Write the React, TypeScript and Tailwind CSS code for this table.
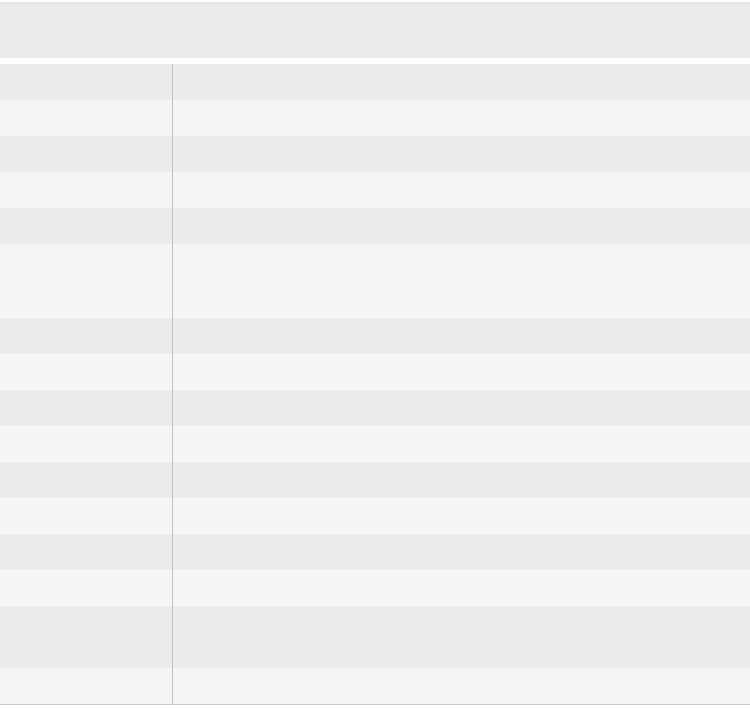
export default function App() {
  // skeleton rows: height of each row in px
  const rows = [36, 36, 36, 36, 36, 74, 36, 36, 36, 36, 36, 36, 36, 36, 62, 36]

  return (
    <div className="w-[750px] h-[709px] bg-white overflow-hidden" style={{ fontFamily: "'Liberation Sans', sans-serif" }}>
      {/* Header placeholder */}
      <div className="mt-[2px] h-[56px] bg-[#ebebeb] border-t-[3px] border-[#e6e6e6]" />

      {/* Table placeholder */}
      <div className="mt-[6px] border-b border-[#c9c9c9]">
        {rows.map((h, i) => (
          <div
            key={i}
            className={`flex ${i % 2 === 0 ? "bg-[#ebebeb]" : "bg-[#f5f5f5]"}`}
            style={{ height: h }}
          >
            <div className="w-[173px] shrink-0 border-r border-[#c2c2c2]" />
            <div className="flex-1" />
          </div>
        ))}
      </div>
    </div>
  )
}
